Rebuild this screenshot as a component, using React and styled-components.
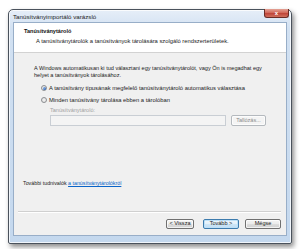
import React from "react";
import styled, { createGlobalStyle } from "styled-components";

const GlobalStyle = createGlobalStyle`
  html, body { margin: 0; padding: 0; background: #ffffff; }
  body { font-family: "Liberation Sans", Arial, sans-serif; font-size: 5.55px; color: #1a1a1a; }
  * { box-sizing: border-box; }
`;

const Desktop = styled.div`
  width: 302px;
  height: 249px;
  padding: 9px 0 0 8px;
  background: #ffffff;
  overflow: hidden;
`;

const Window = styled.div`
  width: 284px;
  height: 235px;
  border: 1px solid #4a525c;
  border-radius: 5px 5px 2px 2px;
  background: linear-gradient(180deg, #e6eef8 0%, #d2e1f2 8%, #c4d8ee 100%);
  box-shadow: 2px 3px 5px rgba(0, 0, 0, 0.45), inset 0 0 0 1px rgba(255, 255, 255, 0.75);
  padding: 0 4px 7px 4px;
  display: flex;
  flex-direction: column;
`;

const TitleBar = styled.div`
  height: 12px;
  display: flex;
  align-items: center;
  justify-content: space-between;
`;

const Title = styled.span`
  font-size: 6.2px;
  color: #1c1c1c;
  line-height: 7px;
`;

const CloseButton = styled.div`
  align-self: flex-start;
  margin-top: -1px;
  margin-right: -2px;
  width: 25px;
  height: 9px;
  border: 1px solid #6b2c26;
  border-top: none;
  border-radius: 0 0 3px 3px;
  background: linear-gradient(180deg, #e4a396 0%, #d26a5c 45%, #c0463a 55%, #d0705e 100%);
  color: #ffffff;
  font-size: 6px;
  font-weight: bold;
  display: flex;
  align-items: center;
  justify-content: center;
  line-height: 1;
`;

const Client = styled.div`
  flex: 1;
  border: 1px solid #98aec8;
  background: #f0f0f0;
  display: flex;
  flex-direction: column;
`;

const Header = styled.div`
  height: 30px;
  background: #ffffff;
  border-bottom: 1px solid #d2d2d2;
  padding: 5px 0 0 10px;
`;

const HeaderTitle = styled.div`
  font-weight: bold;
  line-height: 7px;
  color: #111;
`;

const HeaderText = styled.div`
  margin-top: 3px;
  padding-left: 12px;
  line-height: 7px;
  font-size: 5.8px;
`;

const Body = styled.div`
  flex: 1;
  display: flex;
  flex-direction: column;
  padding: 12px 0 0 9px;
`;

const Content = styled.div`
  padding-left: 11px;
`;

const Paragraph = styled.p`
  margin: 0;
  line-height: 7px;
`;

const RadioRow = styled.label`
  display: flex;
  align-items: center;
  height: 8px;
  margin-top: ${(p) => p.$gap}px;
  padding-left: 7px;
  gap: 2px;
  line-height: 7px;
  font-size: 5.8px;
`;

const Radio = styled.span`
  width: 6px;
  height: 6px;
  border-radius: 50%;
  border: 1px solid #8c8f92;
  background: radial-gradient(circle, #f4f4f4 0%, #dcdcdc 100%);
  display: flex;
  align-items: center;
  justify-content: center;

  &::after {
    content: "";
    display: ${(p) => (p.$checked ? "block" : "none")};
    width: 3px;
    height: 3px;
    border-radius: 50%;
    background: radial-gradient(circle at 35% 35%, #8fb6e8 0%, #245bb0 80%);
  }
`;

const StoreBlock = styled.div`
  padding-left: 16px;
  margin-top: 3px;
`;

const DisabledLabel = styled.div`
  color: #a2a2a2;
  line-height: 7px;
`;

const StoreRow = styled.div`
  display: flex;
  gap: 5px;
  margin-top: 1px;
`;

const StoreInput = styled.div`
  width: 176px;
  height: 11px;
  border: 1px solid #c9ced4;
  background: #f4f4f4;
`;

const Button = styled.div`
  width: ${(p) => p.$w}px;
  height: ${(p) => p.$h || 10}px;
  margin-left: ${(p) => p.$ml || 0}px;
  border: 1px solid ${(p) => (p.$default ? "#3d7bad" : p.$disabled ? "#b4b9be" : "#707070")};
  border-radius: 2px;
  background: ${(p) =>
    p.$disabled
      ? "#f4f4f4"
      : p.$default
      ? "linear-gradient(180deg, #eef6fc 0%, #e3f0fa 50%, #cde6f7 51%, #c2def4 100%)"
      : "linear-gradient(180deg, #f3f3f3 0%, #ebebeb 50%, #dddddd 51%, #cfcfcf 100%)"};
  box-shadow: ${(p) => (p.$default ? "inset 0 0 0 1px #bde0f7" : "inset 0 0 0 1px rgba(255,255,255,0.7)")};
  color: ${(p) => (p.$disabled ? "#8a8a8a" : "#1a1a1a")};
  display: flex;
  align-items: center;
  justify-content: center;
  line-height: 1;
  white-space: nowrap;
`;

const HelpLine = styled.div`
  margin-top: auto;
  margin-bottom: 24px;
  line-height: 7px;
  font-size: 5.3px;
`;

const Link = styled.a`
  color: #0a64c8;
  text-decoration: underline;
`;

const Footer = styled.div`
  padding: 0 5px 6px 4px;
`;

const Separator = styled.div`
  height: 2px;
  border-top: 1px solid #d0d0d0;
  border-bottom: 1px solid #ffffff;
`;

const ButtonRow = styled.div`
  display: flex;
  justify-content: flex-end;
  margin-top: 6px;
`;

export default function App() {
  return (
    <Desktop>
      <GlobalStyle />
      <Window>
        <TitleBar>
          <Title>Tanúsítványimportáló varázsló</Title>
          <CloseButton>x</CloseButton>
        </TitleBar>
        <Client>
          <Header>
            <HeaderTitle>Tanúsítványtároló</HeaderTitle>
            <HeaderText>
              A tanúsítványtárolók a tanúsítványok tárolására szolgáló rendszerterületek.
            </HeaderText>
          </Header>
          <Body>
            <Content>
              <Paragraph>
                A Windows automatikusan ki tud választani egy tanúsítványtárolót, vagy Ön is megadhat egy
                <br />
                helyet a tanúsítványok tárolásához.
              </Paragraph>
              <RadioRow $gap={5}>
                <Radio $checked />
                A tanúsítvány típusának megfelelő tanúsítványtároló automatikus választása
              </RadioRow>
              <RadioRow $gap={4}>
                <Radio />
                Minden tanúsítvány tárolása ebben a tárolóban
              </RadioRow>
              <StoreBlock>
                <DisabledLabel>Tanúsítványtároló:</DisabledLabel>
                <StoreRow>
                  <StoreInput />
                  <Button $w={35} $h={11} $disabled>
                    Tallózás...
                  </Button>
                </StoreRow>
              </StoreBlock>
            </Content>
            <HelpLine>
              További tudnivalók <Link href="#">a tanúsítványtárolókról</Link>
            </HelpLine>
          </Body>
          <Footer>
            <Separator />
            <ButtonRow>
              <Button $w={28}>&lt; Vissza</Button>
              <Button $w={36} $ml={9} $default>
                Tovább &gt;
              </Button>
              <Button $w={36} $ml={6}>
                Mégse
              </Button>
            </ButtonRow>
          </Footer>
        </Client>
      </Window>
    </Desktop>
  );
}
